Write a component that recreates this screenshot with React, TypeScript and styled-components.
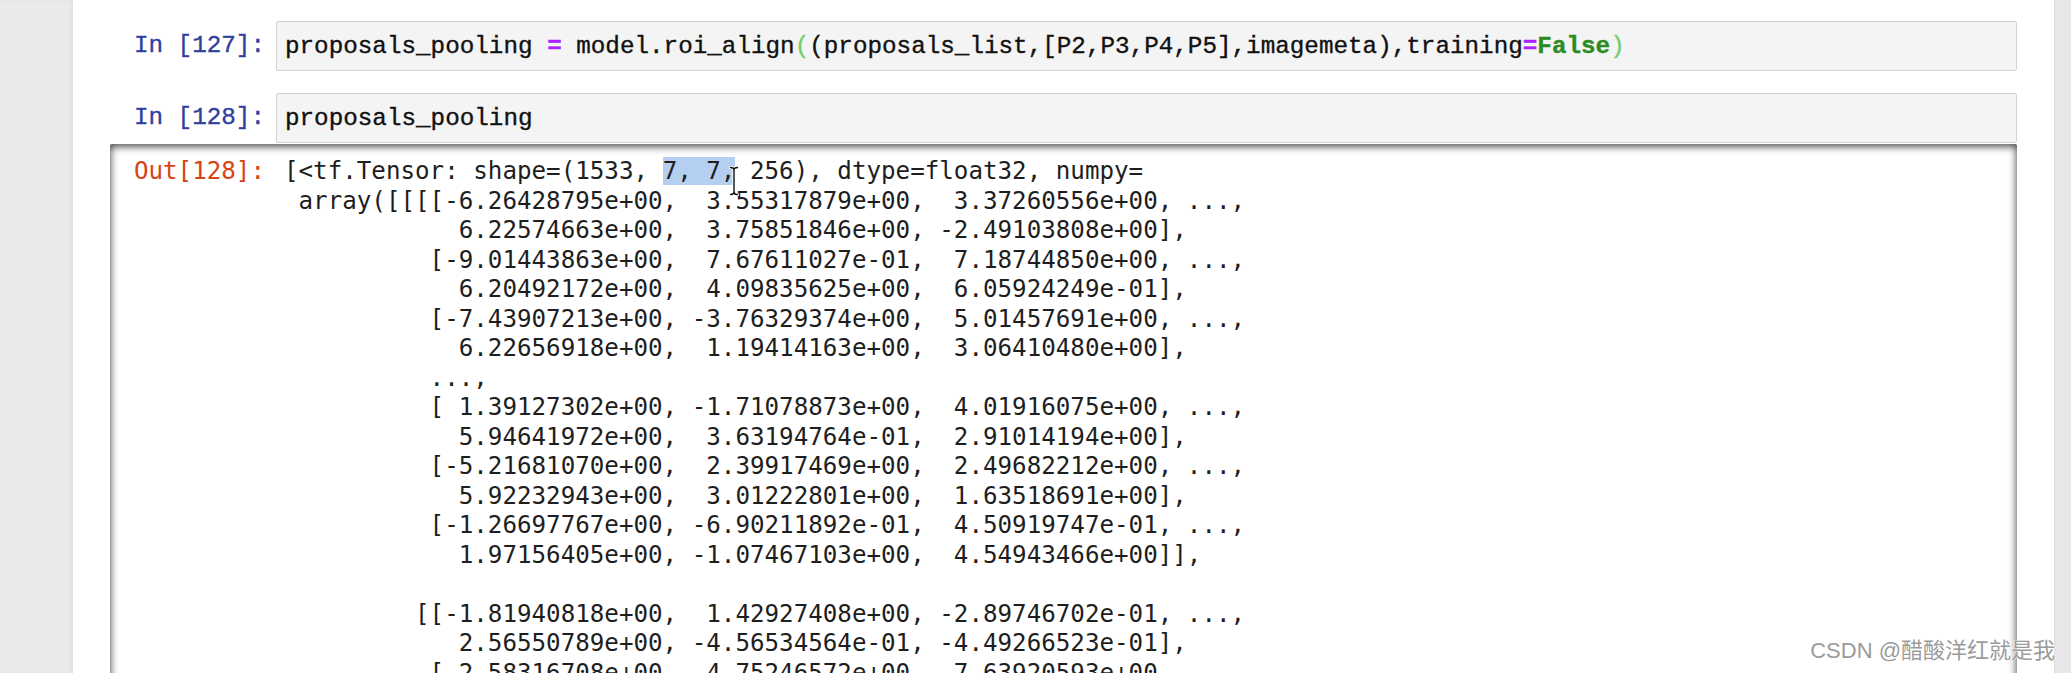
import React from "react";
import styled, { createGlobalStyle } from "styled-components";

const GlobalStyle = createGlobalStyle`
  html, body { margin: 0; padding: 0; background: #fff; overflow: hidden; }
  #root { width: 2071px; height: 673px; }
`;

const Screen = styled.div`
  position: relative;
  display: flex;
  width: 2071px;
  height: 673px;
  overflow: hidden;
  background: #fff;
`;

const SideGutter = styled.div`
  flex: none;
  width: 73px;
  background: #ebe9eb;
  box-shadow: inset -2px 0 3px rgba(0, 0, 0, 0.05);
`;

const ScrollBar = styled.div`
  flex: none;
  width: 16px;
  background: #e8e6e8;
  border-left: 1px solid #dedcde;
`;

const Notebook = styled.main`
  flex: 1;
  min-width: 0;
  display: flex;
  flex-direction: column;
  padding: 21px 37px 0 37px;
  background: #fff;
`;

const CellRow = styled.div<{ $gap?: number }>`
  display: flex;
  align-items: flex-start;
  margin-bottom: ${(p) => p.$gap ?? 0}px;
`;

const mono = `"Liberation Mono", "Courier New", monospace`;
const sansMono = `"DejaVu Sans Mono", Menlo, monospace`;

const Prompt = styled.div<{ $out?: boolean }>`
  flex: none;
  width: 166px;
  box-sizing: border-box;
  padding: ${(p) => (p.$out ? "0" : "10px")} 11px 0 0;
  text-align: right;
  white-space: pre;
  font-family: ${(p) => (p.$out ? sansMono : mono)};
  font-size: ${(p) => (p.$out ? "24.2px" : "24.27px")};
  line-height: 29.3px;
  color: ${(p) => (p.$out ? "#d84315" : "#303f9f")};
  -webkit-text-stroke: ${(p) => (p.$out ? "0" : "0.35px")};
`;

const InputArea = styled.div`
  flex: 1;
  height: 50px;
  box-sizing: border-box;
  padding: 10px 8px 0 8px;
  background: #f5f4f5;
  border: 1px solid #d3d2d3;
  border-radius: 2px;
  white-space: pre;
  font-family: ${mono};
  font-size: 24.27px;
  line-height: 29.3px;
  color: #111;
  -webkit-text-stroke: 0.35px;
`;

const Tok = styled.span<{ $kind: "op" | "kw" | "bracket" }>`
  color: ${(p) =>
    p.$kind === "op" ? "#aa22ff" : p.$kind === "kw" ? "#2e8b1f" : "#6fcf6f"};
  font-weight: ${(p) => (p.$kind === "bracket" ? "normal" : "bold")};
`;

const OutputScroll = styled.div`
  flex: 1;
  display: flex;
  align-items: flex-start;
  margin-top: 1px;
  padding-top: 13px;
  border-radius: 2px;
  background: #fff;
  box-shadow: inset 0 2px 8px rgba(0, 0, 0, 0.8);
`;

const OutText = styled.div`
  flex: 1;
  padding-left: 8px;
  font-family: ${sansMono};
  font-size: 24.2px;
  line-height: 29.5px;
  color: #1e1e1e;
`;

const Line = styled.div`
  height: 29.5px;
  white-space: pre;
`;

const Selected = styled.span`
  background: #b5cff1;
`;

const CaretMark = styled.span`
  position: relative;
  display: inline-block;
  width: 0;
  height: 29px;
  vertical-align: top;
`;

const IBeam = styled.svg`
  position: absolute;
  left: -6px;
  top: 9px;
  width: 10px;
  height: 30px;
  overflow: visible;
`;

const Watermark = styled.div`
  position: absolute;
  right: 16px;
  bottom: 9px;
  font-family: "Liberation Sans", "Noto Sans CJK SC", sans-serif;
  font-size: 22px;
  color: #9b9b9b;
  text-shadow: 0 0 2px #fff, 0 0 1px #fff;
`;

const arrayLines = [
  "            6.22574663e+00,  3.75851846e+00, -2.49103808e+00],",
  "          [-9.01443863e+00,  7.67611027e-01,  7.18744850e+00, ...,",
  "            6.20492172e+00,  4.09835625e+00,  6.05924249e-01],",
  "          [-7.43907213e+00, -3.76329374e+00,  5.01457691e+00, ...,",
  "            6.22656918e+00,  1.19414163e+00,  3.06410480e+00],",
  "          ...,",
  "          [ 1.39127302e+00, -1.71078873e+00,  4.01916075e+00, ...,",
  "            5.94641972e+00,  3.63194764e-01,  2.91014194e+00],",
  "          [-5.21681070e+00,  2.39917469e+00,  2.49682212e+00, ...,",
  "            5.92232943e+00,  3.01222801e+00,  1.63518691e+00],",
  "          [-1.26697767e+00, -6.90211892e-01,  4.50919747e-01, ...,",
  "            1.97156405e+00, -1.07467103e+00,  4.54943466e+00]],",
  "",
  "         [[-1.81940818e+00,  1.42927408e+00, -2.89746702e-01, ...,",
  "            2.56550789e+00, -4.56534564e-01, -4.49266523e-01],",
  "          [ 2.58316708e+00,  4.75246572e+00,  7.63920593e+00, ...,",
];

export default function App() {
  return (
    <>
      <GlobalStyle />
      <Screen>
        <SideGutter />
        <Notebook>
          <CellRow $gap={22}>
            <Prompt>In [127]:</Prompt>
            <InputArea>
              proposals_pooling <Tok $kind="op">=</Tok> model.roi_align
              <Tok $kind="bracket">(</Tok>(proposals_list,[P2,P3,P4,P5],imagemeta),training
              <Tok $kind="op">=</Tok>
              <Tok $kind="kw">False</Tok>
              <Tok $kind="bracket">)</Tok>
            </InputArea>
          </CellRow>
          <CellRow>
            <Prompt>In [128]:</Prompt>
            <InputArea>proposals_pooling</InputArea>
          </CellRow>
          <OutputScroll>
            <Prompt $out>Out[128]:</Prompt>
            <OutText>
              <Line>
                {"[<tf.Tensor: shape=(1533, "}
                <Selected>7, 7,</Selected>
                <CaretMark>
                  <IBeam viewBox="0 0 10 30">
                    <path
                      d="M1.5 1.5 Q5 1.5 5 4 Q5 1.5 8.5 1.5 M5 4 V26 M1.5 28.5 Q5 28.5 5 26 Q5 28.5 8.5 28.5"
                      fill="none"
                      stroke="#fff"
                      strokeWidth="3.2"
                      strokeLinecap="round"
                    />
                    <path
                      d="M1.5 1.5 Q5 1.5 5 4 Q5 1.5 8.5 1.5 M5 4 V26 M1.5 28.5 Q5 28.5 5 26 Q5 28.5 8.5 28.5"
                      fill="none"
                      stroke="#111"
                      strokeWidth="1.4"
                      strokeLinecap="round"
                    />
                  </IBeam>
                </CaretMark>
                {" 256), dtype=float32, numpy="}
              </Line>
              <Line>{" array([[[[-6.26428795e+00,  3.55317879e+00,  3.37260556e+00, ...,"}</Line>
              {arrayLines.map((l, i) => (
                <Line key={i}>{l}</Line>
              ))}
            </OutText>
          </OutputScroll>
        </Notebook>
        <ScrollBar />
        <Watermark>CSDN @醋酸洋红就是我</Watermark>
      </Screen>
    </>
  );
}
